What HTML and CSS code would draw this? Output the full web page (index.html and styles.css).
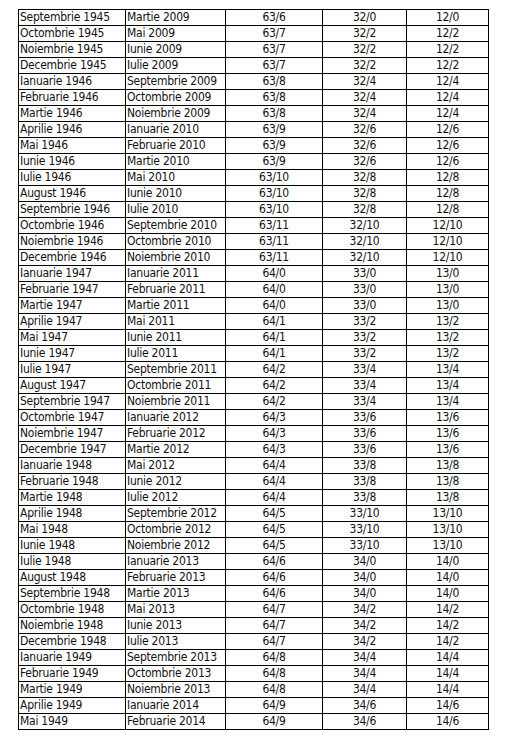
FILE: index.html
```html
<!DOCTYPE html>
<html lang="ro">
<head>
<meta charset="utf-8">
<title>Tabel</title>
<link rel="stylesheet" href="styles.css">
</head>
<body>
<table class="grid">
<colgroup><col class="c1"><col class="c2"><col class="c3"><col class="c4"><col class="c5"></colgroup>
<tbody>
<tr><td>Septembrie 1945</td><td>Martie 2009</td><td class="n">63/6</td><td class="n">32/0</td><td class="n">12/0</td></tr>
<tr><td>Octombrie 1945</td><td>Mai 2009</td><td class="n">63/7</td><td class="n">32/2</td><td class="n">12/2</td></tr>
<tr><td>Noiembrie 1945</td><td>Iunie 2009</td><td class="n">63/7</td><td class="n">32/2</td><td class="n">12/2</td></tr>
<tr><td>Decembrie 1945</td><td>Iulie 2009</td><td class="n">63/7</td><td class="n">32/2</td><td class="n">12/2</td></tr>
<tr><td>Ianuarie 1946</td><td>Septembrie 2009</td><td class="n">63/8</td><td class="n">32/4</td><td class="n">12/4</td></tr>
<tr><td>Februarie 1946</td><td>Octombrie 2009</td><td class="n">63/8</td><td class="n">32/4</td><td class="n">12/4</td></tr>
<tr><td>Martie 1946</td><td>Noiembrie 2009</td><td class="n">63/8</td><td class="n">32/4</td><td class="n">12/4</td></tr>
<tr><td>Aprilie 1946</td><td>Ianuarie 2010</td><td class="n">63/9</td><td class="n">32/6</td><td class="n">12/6</td></tr>
<tr><td>Mai 1946</td><td>Februarie 2010</td><td class="n">63/9</td><td class="n">32/6</td><td class="n">12/6</td></tr>
<tr><td>Iunie 1946</td><td>Martie 2010</td><td class="n">63/9</td><td class="n">32/6</td><td class="n">12/6</td></tr>
<tr><td>Iulie 1946</td><td>Mai 2010</td><td class="n">63/10</td><td class="n">32/8</td><td class="n">12/8</td></tr>
<tr><td>August 1946</td><td>Iunie 2010</td><td class="n">63/10</td><td class="n">32/8</td><td class="n">12/8</td></tr>
<tr><td>Septembrie 1946</td><td>Iulie 2010</td><td class="n">63/10</td><td class="n">32/8</td><td class="n">12/8</td></tr>
<tr><td>Octombrie 1946</td><td>Septembrie 2010</td><td class="n">63/11</td><td class="n">32/10</td><td class="n">12/10</td></tr>
<tr><td>Noiembrie 1946</td><td>Octombrie 2010</td><td class="n">63/11</td><td class="n">32/10</td><td class="n">12/10</td></tr>
<tr><td>Decembrie 1946</td><td>Noiembrie 2010</td><td class="n">63/11</td><td class="n">32/10</td><td class="n">12/10</td></tr>
<tr><td>Ianuarie 1947</td><td>Ianuarie 2011</td><td class="n">64/0</td><td class="n">33/0</td><td class="n">13/0</td></tr>
<tr><td>Februarie 1947</td><td>Februarie 2011</td><td class="n">64/0</td><td class="n">33/0</td><td class="n">13/0</td></tr>
<tr><td>Martie 1947</td><td>Martie 2011</td><td class="n">64/0</td><td class="n">33/0</td><td class="n">13/0</td></tr>
<tr><td>Aprilie 1947</td><td>Mai 2011</td><td class="n">64/1</td><td class="n">33/2</td><td class="n">13/2</td></tr>
<tr><td>Mai 1947</td><td>Iunie 2011</td><td class="n">64/1</td><td class="n">33/2</td><td class="n">13/2</td></tr>
<tr><td>Iunie 1947</td><td>Iulie 2011</td><td class="n">64/1</td><td class="n">33/2</td><td class="n">13/2</td></tr>
<tr><td>Iulie 1947</td><td>Septembrie 2011</td><td class="n">64/2</td><td class="n">33/4</td><td class="n">13/4</td></tr>
<tr><td>August 1947</td><td>Octombrie 2011</td><td class="n">64/2</td><td class="n">33/4</td><td class="n">13/4</td></tr>
<tr><td>Septembrie 1947</td><td>Noiembrie 2011</td><td class="n">64/2</td><td class="n">33/4</td><td class="n">13/4</td></tr>
<tr><td>Octombrie 1947</td><td>Ianuarie 2012</td><td class="n">64/3</td><td class="n">33/6</td><td class="n">13/6</td></tr>
<tr><td>Noiembrie 1947</td><td>Februarie 2012</td><td class="n">64/3</td><td class="n">33/6</td><td class="n">13/6</td></tr>
<tr><td>Decembrie 1947</td><td>Martie 2012</td><td class="n">64/3</td><td class="n">33/6</td><td class="n">13/6</td></tr>
<tr><td>Ianuarie 1948</td><td>Mai 2012</td><td class="n">64/4</td><td class="n">33/8</td><td class="n">13/8</td></tr>
<tr><td>Februarie 1948</td><td>Iunie 2012</td><td class="n">64/4</td><td class="n">33/8</td><td class="n">13/8</td></tr>
<tr><td>Martie 1948</td><td>Iulie 2012</td><td class="n">64/4</td><td class="n">33/8</td><td class="n">13/8</td></tr>
<tr><td>Aprilie 1948</td><td>Septembrie 2012</td><td class="n">64/5</td><td class="n">33/10</td><td class="n">13/10</td></tr>
<tr><td>Mai 1948</td><td>Octombrie 2012</td><td class="n">64/5</td><td class="n">33/10</td><td class="n">13/10</td></tr>
<tr><td>Iunie 1948</td><td>Noiembrie 2012</td><td class="n">64/5</td><td class="n">33/10</td><td class="n">13/10</td></tr>
<tr><td>Iulie 1948</td><td>Ianuarie 2013</td><td class="n">64/6</td><td class="n">34/0</td><td class="n">14/0</td></tr>
<tr><td>August 1948</td><td>Februarie 2013</td><td class="n">64/6</td><td class="n">34/0</td><td class="n">14/0</td></tr>
<tr><td>Septembrie 1948</td><td>Martie 2013</td><td class="n">64/6</td><td class="n">34/0</td><td class="n">14/0</td></tr>
<tr><td>Octombrie 1948</td><td>Mai 2013</td><td class="n">64/7</td><td class="n">34/2</td><td class="n">14/2</td></tr>
<tr><td>Noiembrie 1948</td><td>Iunie 2013</td><td class="n">64/7</td><td class="n">34/2</td><td class="n">14/2</td></tr>
<tr><td>Decembrie 1948</td><td>Iulie 2013</td><td class="n">64/7</td><td class="n">34/2</td><td class="n">14/2</td></tr>
<tr><td>Ianuarie 1949</td><td>Septembrie 2013</td><td class="n">64/8</td><td class="n">34/4</td><td class="n">14/4</td></tr>
<tr><td>Februarie 1949</td><td>Octombrie 2013</td><td class="n">64/8</td><td class="n">34/4</td><td class="n">14/4</td></tr>
<tr><td>Martie 1949</td><td>Noiembrie 2013</td><td class="n">64/8</td><td class="n">34/4</td><td class="n">14/4</td></tr>
<tr><td>Aprilie 1949</td><td>Ianuarie 2014</td><td class="n">64/9</td><td class="n">34/6</td><td class="n">14/6</td></tr>
<tr><td>Mai 1949</td><td>Februarie 2014</td><td class="n">64/9</td><td class="n">34/6</td><td class="n">14/6</td></tr>
</tbody>
</table>
</body>
</html>
```

FILE: styles.css
```css
html, body {
  margin: 0;
  padding: 0;
  background: #ffffff;
}
body {
  padding: 9px 0 0 18px;
  font-family: "DejaVu Sans Condensed", "DejaVu Sans", sans-serif;
  font-size: 12px;
  letter-spacing: -0.25px;
  color: #111111;
}
.grid {
  border-collapse: collapse;
  table-layout: fixed;
  width: 470px;
  border: 1px solid #000000;
}
.grid col.c1 { width: 107px; }
.grid col.c2 { width: 100px; }
.grid col.c3 { width: 97px; }
.grid col.c4 { width: 84px; }
.grid col.c5 { width: 82px; }
.grid td {
  border: 1px solid #000000;
  height: 15px;
  padding: 0 1px;
  line-height: 15px;
  white-space: nowrap;
  overflow: hidden;
  vertical-align: middle;
}
.grid td.n {
  text-align: center;
}
```
